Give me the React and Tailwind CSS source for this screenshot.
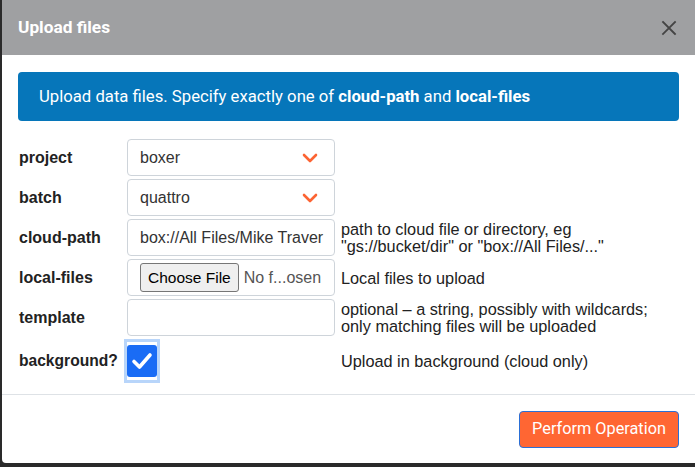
import React from "react";

function Chevron() {
  return (
    <svg width="16" height="10" viewBox="0 0 16 10" className="shrink-0">
      <path d="M2 2 L8 8 L14 2" fill="none" stroke="#fc6433" strokeWidth="2.6" strokeLinecap="round" strokeLinejoin="round" />
    </svg>
  );
}

function Label({ children }) {
  return (
    <div className="flex items-center h-[37px] pl-[1px] text-[16px] font-bold text-[#222] whitespace-nowrap">
      {children}
    </div>
  );
}

function Desc({ children }) {
  return (
    <div className="flex items-center pl-[6px] pt-[1px] text-[16.3px] leading-[17px] text-[#222] whitespace-nowrap">
      <div>{children}</div>
    </div>
  );
}

function Box({ children, className = "" }) {
  return (
    <div className={"h-[37px] w-[208px] rounded-[4px] border border-[#ced4da] bg-white flex items-center " + className}>
      {children}
    </div>
  );
}

export default function App() {
  return (
    <div className="w-[695px] h-[467px] bg-[#2a2a2a] overflow-hidden" style={{ fontFamily: "'Liberation Sans', Arial, sans-serif" }}>
      <div className="ml-[2px] w-[693px] h-[463px] bg-white rounded-bl-[4px] flex flex-col">
        <div className="h-[55px] bg-[#9fa0a2] flex items-center justify-between pl-[16px] pr-[18px] shrink-0">
          <div className="text-white font-bold text-[17.3px]" style={{ fontFamily: "Roboto, sans-serif" }}>Upload files</div>
          <svg width="16" height="16" viewBox="0 0 16 16">
            <path d="M2 2 L14 14 M14 2 L2 14" stroke="#444" strokeWidth="1.8" strokeLinecap="square" />
          </svg>
        </div>
        <div className="px-[16px] pt-[17px]">
          <div className="h-[49px] bg-[#0676ba] rounded-[4px] flex items-center pl-[21px] text-white text-[16.7px]" style={{ fontFamily: "Roboto, sans-serif" }}>
            <span>Upload data files. Specify exactly one of <b>cloud-path</b> and <b>local-files</b></span>
          </div>
          <div className="mt-[18px] grid grid-cols-[109px_208px_1fr] gap-y-[3px]">
            <Label>project</Label>
            <Box className="justify-between pl-[12px] pr-[16px]">
              <span className="text-[16px] text-[#333]">boxer</span>
              <Chevron />
            </Box>
            <div />

            <Label>batch</Label>
            <Box className="justify-between pl-[12px] pr-[16px]">
              <span className="text-[16px] text-[#333]">quattro</span>
              <Chevron />
            </Box>
            <div />

            <Label>cloud-path</Label>
            <Box className="pl-[12px] overflow-hidden">
              <span className="text-[16px] text-[#333] whitespace-nowrap">box://All Files/Mike Traver</span>
            </Box>
            <Desc>path to cloud file or directory, eg<br />"gs://bucket/dir" or "box://All Files/..."</Desc>

            <Label>local-files</Label>
            <Box className="pl-[12px] gap-[5px] overflow-hidden">
              <div className="h-[29px] px-[7px] bg-[#efefef] border border-[#767676] rounded-[3px] flex items-center text-[15.5px] text-black whitespace-nowrap">Choose File</div>
              <span className="text-[16px] text-[#555] whitespace-nowrap">No f...osen</span>
            </Box>
            <Desc>Local files to upload</Desc>

            <Label>template</Label>
            <Box />
            <Desc>optional – a string, possibly with wildcards;<br />only matching files will be uploaded</Desc>

            <div className="flex items-center h-[44px] pl-[1px] text-[15.6px] font-bold text-[#222] whitespace-nowrap">background?</div>
            <div className="h-[44px] flex items-center">
              <div className="-ml-[3px] w-[36px] h-[44px] bg-[#b8d5fa] p-[3px]">
                <div className="w-full h-full bg-white py-[3px]">
                  <div className="w-full h-full bg-[#1a6cf5] rounded-[3px] flex items-center justify-center">
                    <svg width="22" height="18" viewBox="0 0 22 18">
                      <path d="M3 9.5 L8.5 15 L19 3" fill="none" stroke="white" strokeWidth="3.6" strokeLinecap="round" strokeLinejoin="round" />
                    </svg>
                  </div>
                </div>
              </div>
            </div>
            <Desc>Upload in background (cloud only)</Desc>
          </div>
        </div>
        <div className="mt-[11px] border-t border-[#dee2e6] flex-1 flex items-center justify-end pr-[16px]">
          <button className="h-[37px] w-[160px] bg-[#ff6633] border border-[#2a6fd6] rounded-[4px] text-white text-[16.3px]" style={{ fontFamily: "Roboto, sans-serif" }}>Perform Operation</button>
        </div>
      </div>
    </div>
  );
}
